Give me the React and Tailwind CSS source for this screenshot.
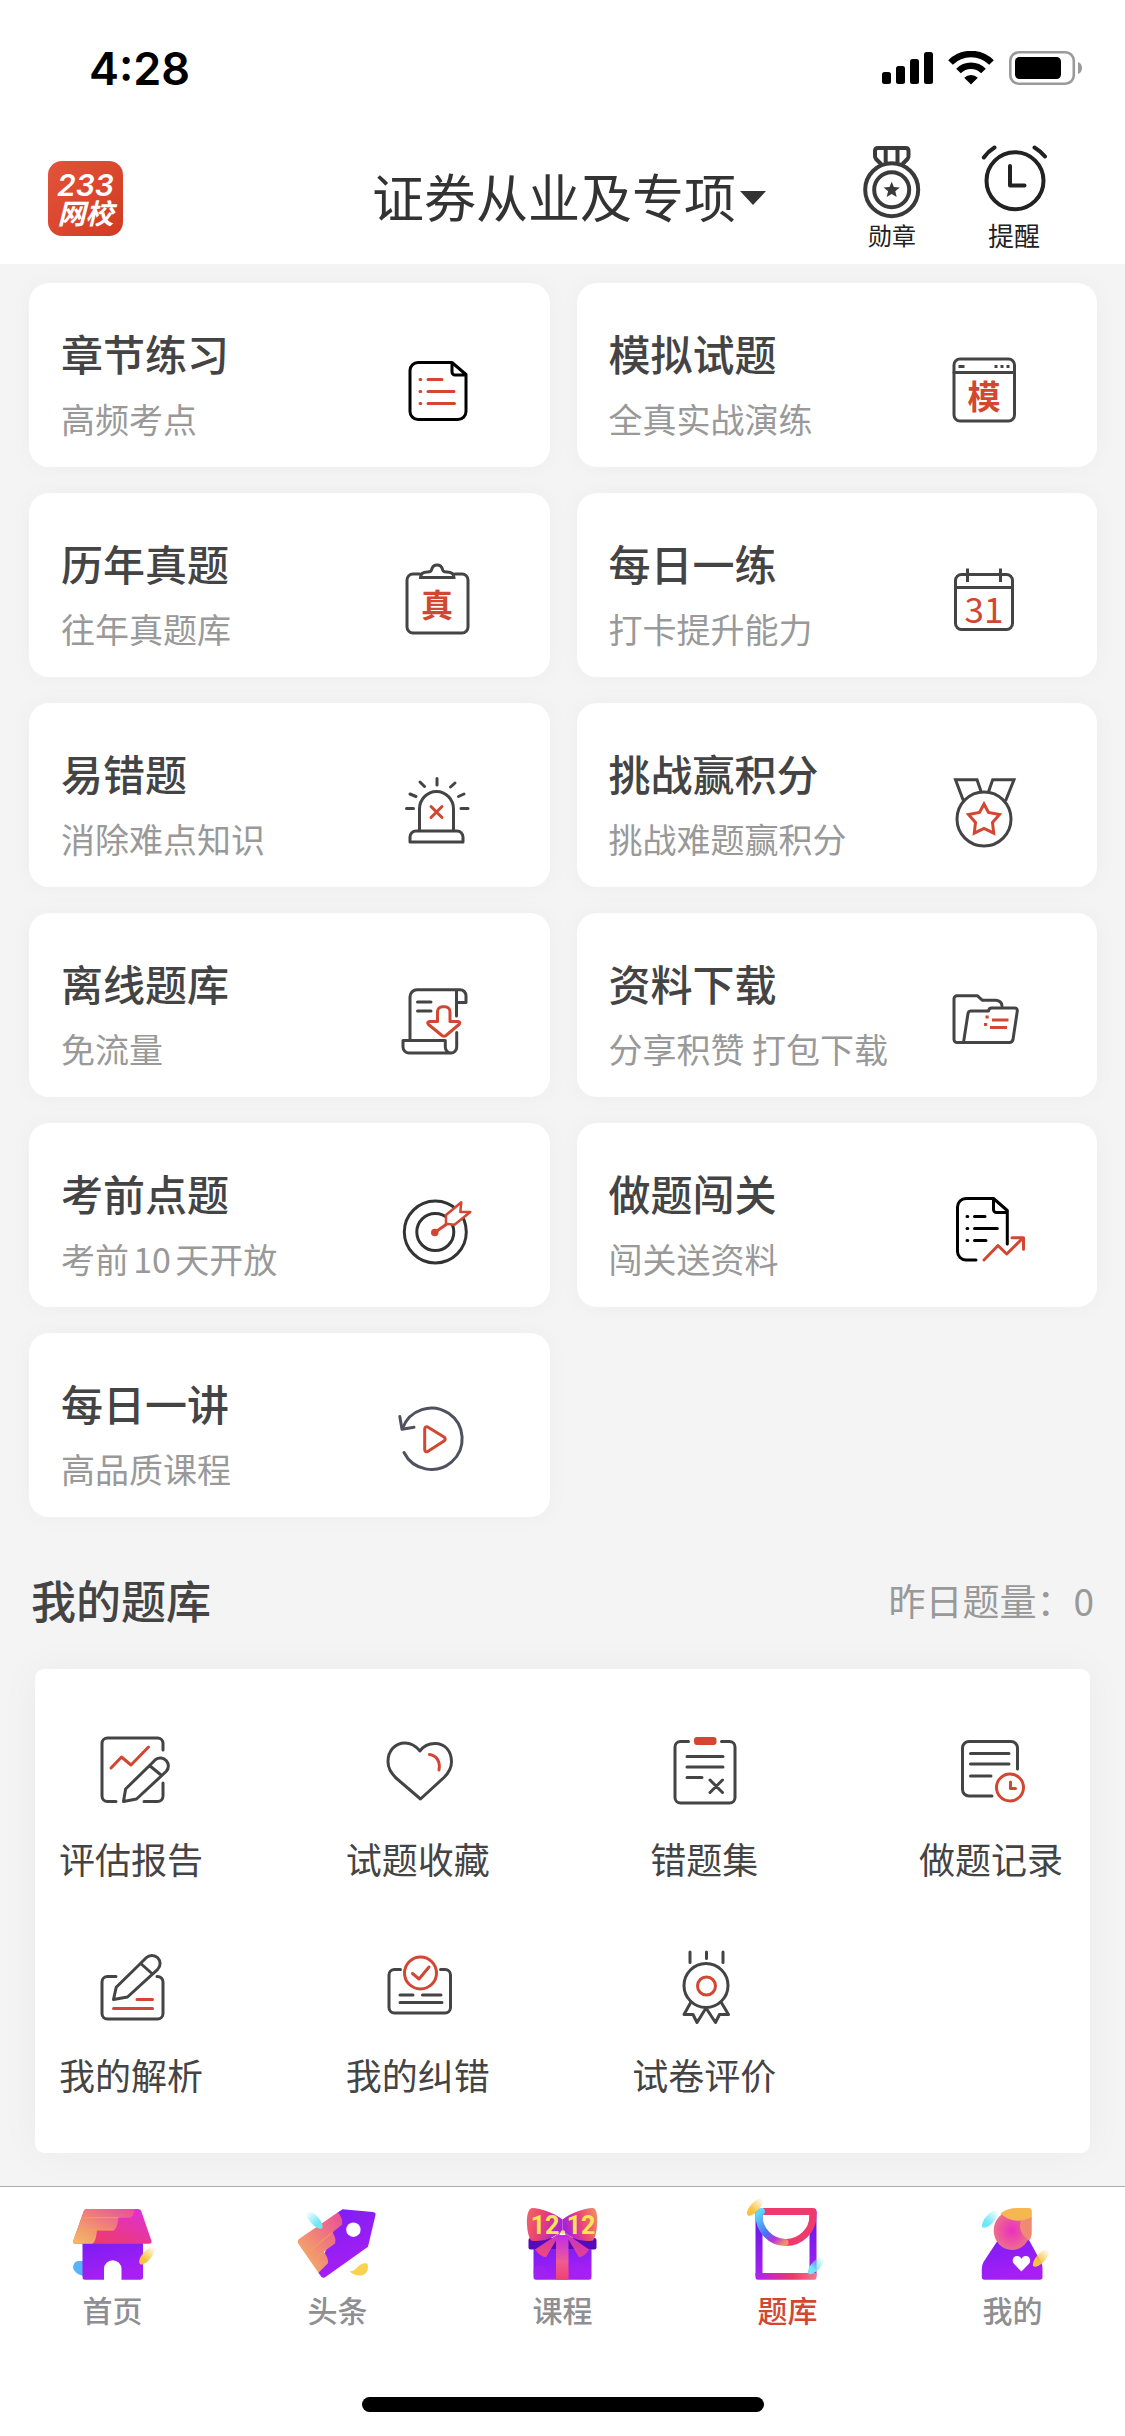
const INK = '#444'
const RED = '#d24732'

// 线条图标统一外壳,84x84 画布
function Line({ color = INK, width = 3, children }) {
  return (
    <svg
      viewBox="0 0 84 84"
      className="w-[84px] h-[84px] shrink-0"
      fill="none"
      stroke={color}
      strokeWidth={width}
      strokeLinecap="round"
      strokeLinejoin="round"
      aria-hidden="true"
    >
      {children}
    </svg>
  )
}

function Glyph({ y, size, children }) {
  return (
    <text
      x="41"
      y={y}
      fontSize={size}
      textAnchor="middle"
      fill={RED}
      stroke="none"
      className="font-['Noto_Sans_CJK_SC',sans-serif] font-bold"
    >
      {children}
    </text>
  )
}

const icons = {
  chapter: (
    <Line color="#000">
      <path d="M56 14.5H22a8 8 0 0 0-8 8v41a8 8 0 0 0 8 8h40a8 8 0 0 0 8-8V26.500L56 14.500V24a3 3 0 0 0 3 3h11" />
      <path stroke={RED} d="M24 31.500h.8M32 31.500h14M24 43.500h.8M32 43.500h26M24 55.500h.8M32 55.500h26.500" />
    </Line>
  ),
  mock: (
    <Line>
      <rect x="11" y="11" width="60.500" height="62" rx="6" />
      <path d="M11 24.500h60" />
      <path strokeLinecap="butt" d="M15.500 18.500h6M51.500 18.500h3M57.500 18.500h3M63.500 18.500h3" />
      <Glyph y="61" size="33">模</Glyph>
    </Line>
  ),
  past: (
    <Line>
      <path d="M24 16h-7a6 6 0 0 0-6 6v47a6 6 0 0 0 6 6h49a6 6 0 0 0 6-6V22a6 6 0 0 0-6-6h-7" />
      <path strokeLinejoin="miter" d="M24.500 19.500c0-4 3-5.500 7-5.500 3.500 0 4-1 4.300-3a5.500 5.500 0 0 1 10.600 0c.3 2 .8 3 4.300 3 4 0 7.300 1.500 7.300 5.500z" />
      <Glyph y="59" size="32">真</Glyph>
    </Line>
  ),
  daily: (
    <Line>
      <rect x="12.500" y="16.500" width="57" height="55" rx="6" />
      <path strokeLinecap="butt" d="M13 29.500h56M24.500 10.500V24M57.500 10.500V24" />
      <text
        x="41"
        y="64.500"
        fontSize="35"
        textAnchor="middle"
        fill={RED}
        stroke="none"
        className="font-['Noto_Sans_CJK_SC',sans-serif]"
      >
        31
      </text>
    </Line>
  ),
  wrong: (
    <Line>
      <path d="M14 74v-5a6 6 0 0 1 6-6h41a6 6 0 0 1 6 6v5z" />
      <path d="M23.500 62V41a17 17.500 0 0 1 34 0v21" />
      <path d="M41 10.500V17M24 14l4.500 4.500M59 15l-4.500 4M14 26l6 2.500M68 26l-5.500 2.500M10.500 40.500h7M65 40.500h7" />
      <path stroke={RED} d="M35 38.500l11 11M46 38.500l-11 11" />
    </Line>
  ),
  challenge: (
    <Line>
      <circle cx="41" cy="51" r="27" />
      <path strokeLinejoin="miter" strokeLinecap="butt" d="M20.500 33L12.500 11.800H34l4 11.500M62.500 33L71 11.800H49.700l-4 11.500" />
      <path
        stroke={RED}
        strokeLinejoin="miter"
        d="M41 36l4.500 8.500 11 2-7 8 1.200 10.700L41 60.500l-9.700 4.700L32.500 54.500l-7-8 11-2z"
      />
    </Line>
  ),
  offline: (
    <Line>
      <path d="M60.500 38V24.500H70V18a6 6 0 0 0-6-6.200H21a7 7 0 0 0-7 7V62M60.500 24V12" />
      <path d="M55 75H13a6 6 0 0 1-6-6v-6.500h42.300V69a5.700 6 0 0 0 11.400 0V54.500" />
      <path d="M21.500 24H35M21.500 33H35" />
      <path stroke={RED} d="M41.500 43.500V34a5 5 0 0 1 5-5.300h2.500a5 5 0 0 1 5 5.300v9.500h8q3 .5 1 3L50 57.500q-2 1.500-4 0L32.500 46.500q-2-2.500 1-3z" />
    </Line>
  ),
  download: (
    <Line>
      <path d="M20.500 64.500H14a3 3 0 0 1-3-3V21a3 3 0 0 1 3-3.200h20.500l5 4.500H53q5.500.5 6 5.500" />
      <path d="M20.500 64.500l4.500-29q.5-2.500 3-2.500h17.500q.5-3 3-3H71.500q3 0 2.800 3L70 61.500q-.8 3-3.500 3z" />
      <path stroke={RED} strokeLinecap="butt" d="M42.500 39h3.200M49 42h16.500M41 46.500h3.200M47 49.500h17" />
    </Line>
  ),
  target: (
    <Line color="#333">
      <circle cx="39.300" cy="44" r="31" />
      <circle cx="39.300" cy="44" r="18.500" />
      <circle cx="38.800" cy="44.500" r="2.300" fill={RED} stroke={RED} />
      <path stroke={RED} d="M38.800 44.500l12-8.500" />
      <path
        fill="#fff"
        stroke={RED}
        strokeWidth="2.500"
        d="M50 27l15.300-12.800L64.300 24h10L58.500 36.700 50 35.700z"
      />
    </Line>
  ),
  stage: (
    <Line color="#000">
      <path d="M33 72H23a8.500 8.500 0 0 1-8.500-8.500V19a8.500 8.500 0 0 1 8.500-8.500h27.500l13.800 12V56M50.500 11v10.500a3 3 0 0 0 3 3h10.800" />
      <path d="M24 28.500h.8M31.500 28.500H42M24 40.500h.8M31.500 40.500h22.800M24 52.500h.8M31.500 52.500H43" />
      <path stroke={RED} d="M41 72l14-14.500 8.700 8.500 16.300-16M69 49.700h11.500v11.500" />
    </Line>
  ),
  lecture: (
    <Line color="#50515f">
      <path d="M8 54.500A30.700 30.700 0 1 0 6.500 30.500" />
      <path d="M3.800 18.600L6 31.200l12-2" />
      <path stroke={RED} d="M28.700 31q.3-3 3-2L48 39q2.500 2 0 4L31.700 53.500q-2.700 1-3-2z" />
    </Line>
  ),
  report: (
    <Line>
      <path d="M74 22v-6.500a5.500 5.500 0 0 0-5.500-5.500h-50A5.500 5.500 0 0 0 13 15.500v52.500a5.500 5.500 0 0 0 5.500 5.500H27M74 55v13a5.500 5.500 0 0 1-5.500 5.500H55" />
      <path stroke={RED} d="M22 40l10.500-11 9.500 8 17.500-18" />
      <path d="M34.500 73.500L36.600 61l24-23.500 6-6a8 8 0 0 1 10.500 12L47.500 71zM60.500 37.500l11.500 9.500" />
    </Line>
  ),
  favorite: (
    <Line>
      <path d="M44 23C39 17 34 15 29 15 19 15 12 23 12 33.500c0 7 3 11 7.500 16L44.500 71 68 49.500c5-5 7.500-9.500 7.500-15.500C75.500 23 69 15.500 59 15.500 52 15.500 47.500 18 44 23z" />
      <path stroke={RED} d="M53.500 26.500c7.500 1 11 7.500 9.500 15.500" />
    </Line>
  ),
  mistakes: (
    <Line>
      <path d="M26.500 13.500h-8A5.500 5.500 0 0 0 13 19v50.500a5.500 5.500 0 0 0 5.500 5.500h49a5.500 5.500 0 0 0 5.500-5.500V19a5.500 5.500 0 0 0-5.500-5.500h-8" />
      <rect x="33" y="10" width="20.500" height="6" rx="2" fill={RED} stroke={RED} strokeWidth="2" />
      <path d="M25 28.500h36M25 39h36M25 49.500h15M48 52l12.500 12.500M60.500 52L48 64.500" />
    </Line>
  ),
  history: (
    <Line>
      <path d="M68.500 41V20a6.500 6.500 0 0 0-6.500-6.500H20a6.500 6.500 0 0 0-6.500 6.500v41.500a6.500 6.500 0 0 0 6.500 6.500h23" />
      <path d="M21.500 25.500H60M21.500 36H60M21.500 48H42" />
      <g stroke={RED}>
        <circle cx="61" cy="59.500" r="13.500" />
        <path d="M61.500 54v6.500h5" />
      </g>
    </Line>
  ),
  analysis: (
    <Line>
      <path d="M27 32.500h-8.500A5.500 5.500 0 0 0 13 38v31.500a5.500 5.500 0 0 0 5.500 5.500h50a5.500 5.500 0 0 0 5.500-5.500V38a5.500 5.500 0 0 0-6-5.500" />
      <path d="M24.500 55.500l2.700-12.200 24.500-24 5.500-5.500a8 8 0 0 1 11.500 11.500L38.500 53zM51.700 19.500L63.500 30" />
      <path stroke={RED} d="M48 55.500h15.500M24.500 64.500h39" />
    </Line>
  ),
  correction: (
    <Line>
      <path d="M24.500 25.500h-6A5.500 5.500 0 0 0 13 31v32.500a5.500 5.500 0 0 0 5.500 5.500H69a5.500 5.500 0 0 0 5.500-5.500V31a5.500 5.500 0 0 0-5.500-5.500h-4.500" />
      <path d="M24 51h13M46.500 51h18.500M24 58.500h42" />
      <g stroke={RED}>
        <circle cx="44.500" cy="29" r="16" />
        <path d="M36.500 29.500l6.500 5.500 10-12" />
      </g>
    </Line>
  ),
  review: (
    <Line>
      <path d="M28 8v10.500M44.500 8v6.500M61 8v10.500" />
      <circle cx="44" cy="41.500" r="22" />
      <circle cx="44.500" cy="42" r="9" stroke={RED} />
      <path d="M29 58l-7 12.500h9l4 8 9-14.500 9.500 14.500 4-8h9L59 58" />
    </Line>
  ),
}

const cards = [
  { title: '章节练习', desc: '高频考点', icon: 'chapter' },
  { title: '模拟试题', desc: '全真实战演练', icon: 'mock' },
  { title: '历年真题', desc: '往年真题库', icon: 'past' },
  { title: '每日一练', desc: '打卡提升能力', icon: 'daily' },
  { title: '易错题', desc: '消除难点知识', icon: 'wrong' },
  { title: '挑战赢积分', desc: '挑战难题赢积分', icon: 'challenge' },
  { title: '离线题库', desc: '免流量', icon: 'offline' },
  { title: '资料下载', desc: '分享积赞 打包下载', icon: 'download' },
  { title: '考前点题', desc: '考前10天开放', icon: 'target' },
  { title: '做题闯关', desc: '闯关送资料', icon: 'stage' },
  { title: '每日一讲', desc: '高品质课程', icon: 'lecture' },
]

const mine = [
  { label: '评估报告', icon: 'report' },
  { label: '试题收藏', icon: 'favorite' },
  { label: '错题集', icon: 'mistakes' },
  { label: '做题记录', icon: 'history' },
  { label: '我的解析', icon: 'analysis' },
  { label: '我的纠错', icon: 'correction' },
  { label: '试卷评价', icon: 'review' },
]

// 底部彩色图标共用的渐变
function Gradients() {
  return (
    <svg className="absolute w-0 h-0" aria-hidden="true">
      <defs>
        <linearGradient id="violet" x1="0" y1="0" x2="0.4" y2="1">
          <stop offset="0" stopColor="#7a1df5" />
          <stop offset="1" stopColor="#a91ff3" />
        </linearGradient>
        <linearGradient id="deep" gradientUnits="userSpaceOnUse" x1="0" y1="5" x2="0" y2="76">
          <stop offset="0" stopColor="#5b14e6" />
          <stop offset="1" stopColor="#ab22f2" />
        </linearGradient>
        <linearGradient id="pink" x1="0" y1="1" x2="1" y2="0">
          <stop offset="0.2" stopColor="#ee3a70" />
          <stop offset="1" stopColor="#dd2fdc" />
        </linearGradient>
        <linearGradient id="warm" x1="0" y1="1" x2="1" y2="0">
          <stop offset="0" stopColor="#f5bd62" />
          <stop offset="0.5" stopColor="#f08379" />
          <stop offset="1" stopColor="#ea4c9c" />
        </linearGradient>
        <linearGradient id="bowLeft" x1="0" y1="0" x2="1" y2="0.3">
          <stop offset="0" stopColor="#ee6a68" />
          <stop offset="0.5" stopColor="#ec3e74" />
          <stop offset="1" stopColor="#a922d8" />
        </linearGradient>
        <linearGradient id="bowRight" x1="1" y1="0" x2="0" y2="0.3">
          <stop offset="0" stopColor="#f09465" />
          <stop offset="0.5" stopColor="#ec4a70" />
          <stop offset="1" stopColor="#a922d8" />
        </linearGradient>
        <linearGradient id="tail" x1="0.8" y1="0" x2="0.3" y2="1">
          <stop offset="0" stopColor="#c030d0" />
          <stop offset="1" stopColor="#f04878" />
        </linearGradient>
        <linearGradient id="band" x1="0" y1="0" x2="0" y2="1">
          <stop offset="0" stopColor="#c32af0" />
          <stop offset="0.6" stopColor="#ee5c92" />
          <stop offset="1" stopColor="#f04070" />
        </linearGradient>
        <linearGradient id="base" gradientUnits="userSpaceOnUse" x1="10" y1="0" x2="71" y2="0">
          <stop offset="0" stopColor="#ab22f2" />
          <stop offset="0.6" stopColor="#f0386a" />
          <stop offset="1" stopColor="#ee7a92" />
        </linearGradient>
        <linearGradient id="strap" gradientUnits="userSpaceOnUse" x1="13" y1="10" x2="40" y2="39">
          <stop offset="0" stopColor="#5cd6fa" />
          <stop offset="0.5" stopColor="#4a6ef5" />
          <stop offset="0.75" stopColor="#c02fd8" />
          <stop offset="1" stopColor="#f0906a" />
        </linearGradient>
        <radialGradient id="face">
          <stop offset="0" stopColor="#ea2fc0" />
          <stop offset="1" stopColor="#ee6d8c" />
        </radialGradient>
        <linearGradient id="gold" x1="0" y1="1" x2="0" y2="0">
          <stop offset="0.3" stopColor="#f8c33c" />
          <stop offset="1" stopColor="#f8c33c" stopOpacity="0" />
        </linearGradient>
        <linearGradient id="aqua" x1="0" y1="1" x2="0" y2="0">
          <stop offset="0.3" stopColor="#70e8f6" />
          <stop offset="1" stopColor="#70e8f6" stopOpacity="0" />
        </linearGradient>
      </defs>
    </svg>
  )
}

function Feather({ x, y, angle, fill }) {
  return (
    <ellipse rx="4.500" ry="11" fill={fill} transform={`translate(${x} ${y}) rotate(${angle})`} />
  )
}

function TabIcon({ children }) {
  return (
    <svg viewBox="0 0 84 84" className="w-[84px] h-[84px] overflow-visible" aria-hidden="true">
      {children}
    </svg>
  )
}

const tabs = [
  {
    label: '首页',
    icon: (
      <TabIcon>
        <path fill="#58b4fa" d="M12 58H7q-5 1-5 7 1 5 10 8z" />
        <path fill="url(#violet)" d="M11.500 40h60.500v34q0 2.700-2.700 2.700H50.500V66a8.700 8.700 0 0 0-17.500 0v10.700H14q-2.500 0-2.500-2.700z" />
        <path fill="url(#pink)" d="M16 6h51q2.500 0 3.300 2.300L80.500 38q.5 2.700-2.500 2.700H4.500Q1.300 40.700 2.200 38L12.700 8.300Q13.500 6 16 6z" />
        <path fill="url(#warm)" d="M16 6h47.400q-.4 7-4 8.700H47.400q-1 10-4 12.300H26q-1 12-4.500 13.700h-17Q1.300 40.700 2.200 38L12.700 8.300Q13.500 6 16 6z" />
        <path fill="none" stroke="#f3a34c" strokeWidth="1" d="M10.500 14.700h37M6.500 27H43" />
        <Feather x={76} y={52.5} angle={40} fill="url(#gold)" />
      </TabIcon>
    ),
  },
  {
    label: '头条',
    icon: (
      <TabIcon>
        <path fill="url(#violet)" d="M42 9.300l4.600-3L77 9q3 .5 2.500 3L72 43.700 29.500 74q-2 1.500-4 0L22.400 69.700z" />
        <path fill="url(#warm)" d="M42 9.300q5.500 7 4 12.500l-9.400 7.500q4 7 2.400 11.300l-11.300 8.100q5 6.500 4.300 11.600l-9.600 9.400L2.500 41q-1.800-3 .5-5z" />
        <path fill="none" stroke="#f3a34c" strokeWidth="1" d="M36.600 29.300L11 50M27.700 48.700L16.500 58.500" />
        <circle cx="57.400" cy="26.700" r="7.200" fill="#fff" />
        <Feather x={18.5} y={17} angle={-42} fill="url(#aqua)" />
        <path fill="#f9d34f" d="M53.500 68.500q5-.5 8-4.500 4.500-5 10-3.500 2 8-4 11.500-8 2-14-3.500z" />
      </TabIcon>
    ),
  },
  {
    label: '课程',
    icon: (
      <TabIcon>
        <rect x="7.500" y="35" width="68" height="11.500" rx="2" fill="#560bb8" />
        <path fill="url(#violet)" d="M12.500 46h58v28q0 2.700-2.500 2.700H15q-2.500 0-2.500-2.700z" />
        <circle cx="19" cy="69" r="6.500" fill="#a421f2" opacity="0.6" />
        <circle cx="56" cy="67" r="8" fill="#a421f2" opacity="0.6" />
        <rect x="35" y="32" width="12.500" height="44.700" fill="url(#band)" />
        <path fill="url(#tail)" d="M40 29L14 46.500q5 7 11 7.800zM43 29l25 17.500q-4 7-10 7.800z" />
        <path fill="url(#bowLeft)" d="M41.500 16.500C31 9 21 5.500 11 5 6.500 6 5.500 15 6 22q.5 10 4 15.500 10 2 20-2.500l11.500-7z" />
        <path fill="url(#bowRight)" d="M41.500 16.500C52 9 62 5.500 72 5c4.500 1 4.500 10 4 17q-.5 10-4 15.500-10 2-20-2.500l-10.500-7z" />
        <text
          x="42"
          y="31"
          fontSize="25"
          fill="#fce653"
          textAnchor="middle"
          className="font-['Roboto',sans-serif] font-bold"
        >
          12.12
        </text>
      </TabIcon>
    ),
  },
  {
    label: '题库',
    active: true,
    icon: (
      <TabIcon>
        <path fill="none" stroke="url(#deep)" strokeWidth="7" d="M13 8v65M67 8v65" />
        <path fill="url(#base)" d="M9.500 70h61v4.500q0 2.200-2.200 2.200H12q-2.500 0-2.500-2.200z" />
        <path fill="none" stroke="#ee3a6c" strokeWidth="7" strokeLinejoin="round" d="M17 8.500h50v4a27 27 0 0 1-27 27" />
        <path fill="none" stroke="url(#strap)" strokeWidth="7" strokeLinecap="round" d="M15.500 8.500q-2.500 0-2.500 4a27 27 0 0 0 26 27" />
        <Feather x={9} y={4} angle={42} fill="url(#gold)" />
        <Feather x={70} y={62.5} angle={42} fill="url(#aqua)" />
      </TabIcon>
    ),
  },
  {
    label: '我的',
    icon: (
      <TabIcon>
        <path fill="url(#violet)" d="M27 37h31l12.500 23q1 2 1 5v9q0 2.700-2.700 2.700H13.500q-2.700 0-2.700-2.700v-8q0-4 1.700-7z" />
        <path fill="#f2896f" d="M40 6h18q2.500 0 2.500 2.500V31q-.5 5-3 6.500z" />
        <ellipse cx="41" cy="27.500" rx="18.300" ry="19.500" fill="url(#face)" />
        <path fill="#f08a72" d="M50 17l10.500-3V31q-.5 4-3 6Q46 29 50 17z" />
        <path fill="#f6b750" d="M29.500 10.500Q36 5 46 5h12q2.500 0 2.500 2.500V14q-17 9-31-3.500z" />
        <path fill="#fff" d="M50.400 68.500l-7.500-7.700c-3-4 0-8.500 4-7.700 2 .4 3 1.700 3.500 3 .6-1.300 1.600-2.600 3.600-3 4-.8 7 3.700 4 7.700z" />
        <Feather x={19} y={16} angle={42} fill="url(#aqua)" />
        <Feather x={70} y={55} angle={42} fill="url(#gold)" />
      </TabIcon>
    ),
  },
]

function StatusBar() {
  return (
    <div className="h-[132px] pt-1 pl-[89px] pr-[43px] flex items-center justify-between text-black">
      <span className="font-['Inter',sans-serif] font-semibold text-[45px] leading-none">4:28</span>
      <div className="flex items-center gap-[15px]" aria-hidden="true">
        <svg viewBox="0 0 51 34" className="w-[51px] h-[34px]">
          <rect y="21" width="9" height="12" rx="2.500" />
          <rect x="14" y="15" width="9" height="18" rx="2.500" />
          <rect x="28" y="8" width="9" height="25" rx="2.500" />
          <rect x="42" y="1" width="9" height="32" rx="2.500" />
        </svg>
        <svg viewBox="0 0 46 34" className="w-[46px] h-[34px]" fill="none" stroke="#000" strokeWidth="6.500">
          <path d="M2.500 11.500a29 29 0 0 1 41 0M10.500 20a17.500 17.500 0 0 1 25 0" />
          <path fill="#000" stroke="none" d="M23 33.500l-6.800-6.800a9.600 9.600 0 0 1 13.600 0z" />
        </svg>
        <svg viewBox="0 0 73 34" className="w-[73px] h-[34px]">
          <rect x="1.300" y="1.300" width="63.500" height="31.400" rx="8.500" fill="none" stroke="#9a9a9a" strokeWidth="2.600" />
          <rect x="6" y="6" width="46" height="22" rx="4.500" />
          <path fill="#9a9a9a" d="M69 11q4 1.500 4 6t-4 6z" />
        </svg>
      </div>
    </div>
  )
}

function Header() {
  return (
    <header className="bg-white">
      <StatusBar />
      <div className="h-[132px] pl-12 pr-[35px] grid grid-cols-[1fr_auto_1fr] items-center">
        <a
          href="#home"
          className="w-[75px] h-[75px] rounded-[14px] bg-gradient-to-br from-[#e2543a] to-[#d23a22] text-white italic text-center flex flex-col justify-center"
        >
          <span className="font-['Inter',sans-serif] font-semibold text-[30px] leading-[28px]">233</span>
          <span className="font-bold text-[28px] leading-[26px]">网校</span>
        </a>
        <button type="button" className="flex items-center gap-1 text-[#333]">
          <span className="pb-1 text-[52px] leading-[72px]">证券从业及专项</span>
          <svg viewBox="0 0 26 14" className="w-[26px] h-[14px]" fill="#333" aria-hidden="true">
            <path d="M0 0h26L13 14z" />
          </svg>
        </button>
        <div className="flex justify-end gap-[38px] pr-[34px]">
          <button type="button" className="w-[84px] flex flex-col items-center text-[#222]">
            <svg viewBox="0 0 84 74" className="w-[84px] h-[74px] overflow-visible" fill="none" stroke="#3a3a3a" strokeWidth="4" aria-hidden="true">
              <circle cx="41.700" cy="46.700" r="26.500" />
              <circle cx="41.700" cy="46.700" r="17.500" />
              <path strokeLinejoin="round" d="M31 21l-5-5q-1.500-2-1-4V8q0-3 3-3h27.500q3 0 3 3v4q.5 2-1 4l-5 5M35.700 5v14M47.500 5v14" />
              <path fill="#3a3a3a" stroke="none" d="M41.700 38.700l2.200 5.300 5.900.4-4.500 3.800 1.400 5.800-5-3.100-5 3.100 1.400-5.800-4.500-3.800 5.900-.4z" />
            </svg>
            <span className="text-2xl leading-9">勋章</span>
          </button>
          <button type="button" className="w-[84px] flex flex-col items-center text-[#222]">
            <svg viewBox="0 0 84 74" className="w-[84px] h-[74px]" fill="none" stroke="#222" strokeWidth="4" strokeLinecap="round" strokeLinejoin="round" aria-hidden="true">
              <circle cx="43" cy="37.700" r="28.500" />
              <path d="M38 23v19.500h14.500M11.800 14.500Q16 8.500 22.500 4.500M62.500 4.500Q69 8.500 73 13.500" />
            </svg>
            <span className="text-[26px] leading-9">提醒</span>
          </button>
        </div>
      </div>
    </header>
  )
}

function TabBar() {
  return (
    <nav className="mt-auto bg-white border-t border-[#aaa] pt-4 pb-6">
      <Gradients />
      <div className="grid grid-cols-5">
        {tabs.map((t) => (
          <a
            key={t.label}
            href={`#${t.label}`}
            aria-current={t.active ? 'page' : undefined}
            className={`flex flex-col items-center gap-0.5 text-[30px] leading-10 font-medium ${
              t.active ? 'text-[#d24732]' : 'text-[#8e8e93]'
            }`}
          >
            {t.icon}
            {t.label}
          </a>
        ))}
      </div>
      <div className="mt-[68px] mx-auto w-[402px] h-[15px] rounded-full bg-black" />
    </nav>
  )
}

export default function App() {
  return (
    <div className="min-h-screen bg-[#f4f4f4] flex flex-col font-['Noto_Sans_CJK_SC',sans-serif] text-[#444]">
      <Header />

      <main>
        <div className="grid grid-cols-2 gap-x-[27px] gap-y-[26px] pl-[29px] pr-7 pt-[19px]">
          {cards.map((c) => (
            <a
              key={c.title}
              href={`#${c.icon}`}
              className="h-[184px] pl-8 pr-[70px] pt-10 flex justify-between bg-white rounded-[20px] shadow-[0_0_24px_rgba(0,0,0,0.03)]"
            >
              <div className="whitespace-nowrap">
                <h2 className="text-[42px] leading-[60px] font-medium">{c.title}</h2>
                <p className="mt-3 text-[34px] leading-[48px] text-[#999] [text-autospace:normal]">{c.desc}</p>
              </div>
              <div className="pt-[25px]">{icons[c.icon]}</div>
            </a>
          ))}
        </div>

        <div className="mt-[53px] px-[31px] flex items-center justify-between">
          <h2 className="text-[45px] leading-[60px] font-medium">我的题库</h2>
          <span className="text-[37px] leading-[60px] text-[#999]">昨日题量：0</span>
        </div>

        <div className="mt-[39px] mb-[33px] mx-[35px] pt-[59px] pb-[54px] pl-6 pr-[27px] grid grid-cols-[repeat(4,144px)] justify-between gap-y-[61px] bg-white rounded-[9px] shadow-[0_0_40px_rgba(0,0,0,0.045)]">
          {mine.map((m) => (
            <a key={m.label} href={`#${m.icon}`} className="flex flex-col items-center gap-[21px]">
              {icons[m.icon]}
              <span className="text-4xl leading-[50px]">{m.label}</span>
            </a>
          ))}
        </div>
      </main>

      <TabBar />
    </div>
  )
}
